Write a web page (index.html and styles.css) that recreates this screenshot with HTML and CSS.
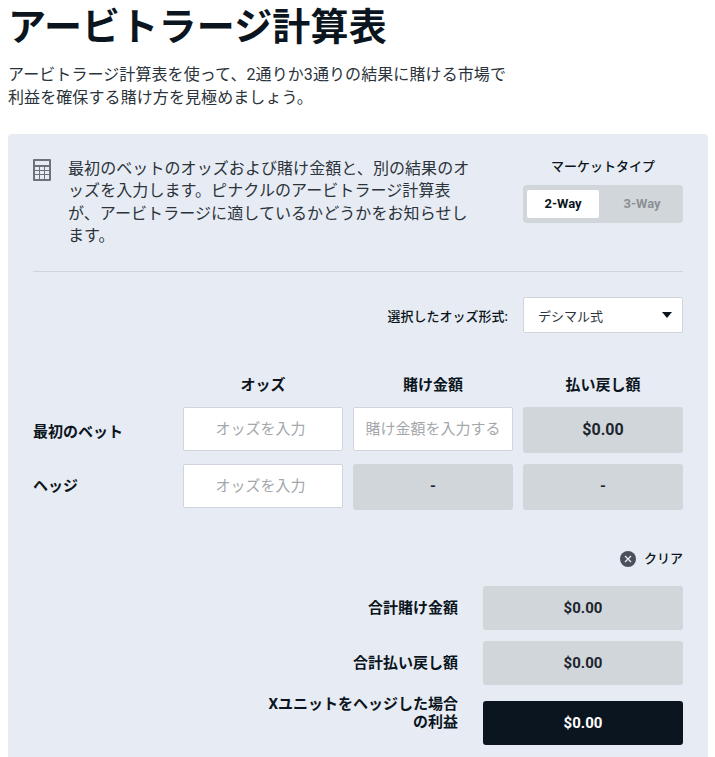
FILE: index.html
```html
<!DOCTYPE html>
<html lang="ja">
<head>
  <meta charset="UTF-8">
  <meta name="viewport" content="width=device-width, initial-scale=1.0">
  <title>アービトラージ計算表</title>
  <link rel="stylesheet" href="styles.css">
</head>
<body>

  <h1>アービトラージ計算表</h1>
  <p class="lead">アービトラージ計算表を使って、2通りか3通りの結果に賭ける市場で<br>利益を確保する賭け方を見極めましょう。</p>

  <div class="panel">

    <!-- Intro and market type -->
    <div class="intro">
      <svg class="calc-icon" width="18" height="22" viewBox="0 0 18 22">
        <path fill="#6d727a" fill-rule="evenodd" d="M1 0h16a1 1 0 0 1 1 1v20a1 1 0 0 1-1 1H1a1 1 0 0 1-1-1V1a1 1 0 0 1 1-1zM2 2v4h14V2zM2 8v3h4V8zM7 8v3h4V8zM12 8v3h4V8zM2 12v3h4v-3zM7 12v3h4v-3zM12 12v3h4v-3zM2 16v4h4v-4zM7 16v4h4v-4zM12 16v4h4v-4z"/>
      </svg>
      <p class="intro-text">最初のベットのオッズおよび賭け金額と、別の結果のオッズを入力します。ピナクルのアービトラージ計算表が、アービトラージに適しているかどうかをお知らせします。</p>
      <div class="market">
        <div class="market-title">マーケットタイプ</div>
        <div class="toggle">
          <span class="toggle-btn active">2-Way</span>
          <span class="toggle-btn">3-Way</span>
        </div>
      </div>
    </div>

    <!-- Odds format -->
    <div class="format-row">
      <span class="format-label">選択したオッズ形式:</span>
      <div class="select">
        <span>デシマル式</span>
        <span class="caret"></span>
      </div>
    </div>

    <!-- Bets table -->
    <div class="bets">
      <div></div>
      <div class="col-head">オッズ</div>
      <div class="col-head">賭け金額</div>
      <div class="col-head">払い戻し額</div>

      <div class="row-label first">最初のベット</div>
      <input class="field odds" type="text" placeholder="オッズを入力">
      <input class="field" type="text" placeholder="賭け金額を入力する">
      <div class="output amount">$0.00</div>

      <div class="row-label">ヘッジ</div>
      <input class="field odds" type="text" placeholder="オッズを入力">
      <div class="output">-</div>
      <div class="output">-</div>
    </div>

    <div class="clear-row">
      <svg width="16" height="16" viewBox="0 0 16 16">
        <circle cx="8" cy="8" r="8" fill="#4a4f59"/>
        <path d="M5 5l6 6M11 5l-6 6" stroke="#e7ebf3" stroke-width="1.4" fill="none"/>
      </svg>
      <span>クリア</span>
    </div>

    <!-- Totals -->
    <div class="totals">
      <div class="total-label">合計賭け金額</div>
      <div class="output">$0.00</div>
      <div class="total-label">合計払い戻し額</div>
      <div class="output">$0.00</div>
      <div class="total-label profit-label">Xユニットをヘッジした場合の利益</div>
      <div class="output profit">$0.00</div>
    </div>

  </div>

</body>
</html>
```

FILE: styles.css
```css
/* General Page Styles */
html, body {
  height: 757px;
  overflow: hidden;
}

body {
  font-family: Roboto, 'Noto Sans CJK JP', sans-serif;
  background-color: #ffffff;
  color: #0b1520;
  margin: 0;
  padding: 0 7px 0 8px;
}

h1 {
  margin: 0;
  padding-top: 4px;
  font-size: 38px;
  line-height: 46px;
  font-weight: 700;
  letter-spacing: 0.2px;
}

.lead {
  margin: 13px 0 0;
  font-size: 16px;
  line-height: 23px;
  letter-spacing: 0.09px;
  color: #2b333b;
}

/* Main Panel */
.panel {
  margin-top: 25px;
  background-color: #e7ebf3;
  border-radius: 4px 4px 0 0;
  padding: 25px 25px 12px;
  height: 623px;
  box-sizing: border-box;
}

.intro {
  display: flex;
  align-items: flex-start;
  height: 112px;
  border-bottom: 1px solid #d0d4dc;
}

.calc-icon {
  flex: none;
  margin-right: 17px;
}

.intro-text {
  margin: -1px 0 0;
  width: 402px;
  flex: none;
  font-size: 16px;
  line-height: 22.4px;
  letter-spacing: 0.08px;
  color: #2b333b;
}

/* Market Type Toggle */
.market {
  margin-left: auto;
  width: 160px;
}

.market-title {
  text-align: center;
  font-size: 13px;
  line-height: 16px;
  font-weight: 500;
  margin-bottom: 10px;
}

.toggle {
  display: flex;
  gap: 7px;
  height: 38px;
  padding: 5px 4px;
  box-sizing: border-box;
  background-color: #d1d6da;
  border-radius: 4px;
}

.toggle-btn {
  width: 72px;
  line-height: 28px;
  text-align: center;
  font-size: 13px;
  font-weight: 700;
  color: #8b9096;
  border-radius: 2px;
}

.toggle-btn.active {
  background-color: #ffffff;
  color: #0b1520;
}

/* Odds Format */
.format-row {
  display: flex;
  justify-content: flex-end;
  align-items: center;
  gap: 15px;
  margin-top: 25px;
}

.format-label {
  font-size: 13px;
  font-weight: 500;
}

.select {
  display: flex;
  justify-content: space-between;
  align-items: center;
  width: 160px;
  height: 36px;
  box-sizing: border-box;
  padding: 0 10px 0 14px;
  background-color: #ffffff;
  border: 1px solid #d0d4dc;
  border-radius: 2px;
  font-size: 13px;
  color: #2b333b;
}

.caret {
  width: 0;
  height: 0;
  border-left: 5.5px solid transparent;
  border-right: 5.5px solid transparent;
  border-top: 6px solid #0b1520;
}

/* Bets Table */
.bets {
  display: grid;
  grid-template-columns: 150px 170px 170px 160px;
  grid-template-rows: 24px 46px 46px;
  row-gap: 11px;
  align-items: start;
  margin-top: 39px;
}

.col-head {
  width: 160px;
  margin-top: 1px;
  text-align: center;
  font-size: 15px;
  line-height: 24px;
  font-weight: 700;
}

.row-label {
  font-size: 15px;
  font-weight: 700;
  line-height: 22px;
  margin-top: 11px;
}

.row-label.first {
  margin-top: 14px;
}

.field {
  width: 160px;
  height: 44px;
  box-sizing: border-box;
  padding: 0 4px;
  background-color: #ffffff;
  border: 1px solid #d0d4dc;
  border-radius: 2px;
  text-align: center;
  font-family: inherit;
  font-size: 15px;
  outline: none;
}

.field.odds {
  padding-right: 9px;
}

.field::placeholder {
  color: #a3a7ab;
  opacity: 1;
}

.output {
  height: 44px;
  line-height: 44px;
  width: 160px;
  background-color: #d1d6da;
  border-radius: 3px;
  text-align: center;
  font-size: 15px;
  font-weight: 700;
  color: #1c252e;
}

.bets .output {
  height: 46px;
  line-height: 45px;
}

.bets .amount {
  font-size: 16px;
}

/* Clear */
.clear-row {
  display: flex;
  justify-content: flex-end;
  align-items: center;
  gap: 8px;
  margin-top: 41px;
  font-size: 13px;
  line-height: 16px;
  font-weight: 500;
}

/* Totals */
.totals {
  display: grid;
  grid-template-columns: 1fr 200px;
  column-gap: 25px;
  align-items: center;
  row-gap: 11px;
  margin-top: 19px;
}

.totals .output {
  width: 200px;
}

.total-label {
  text-align: right;
  font-size: 15px;
  line-height: 18px;
  font-weight: 700;
}

.profit-label {
  align-self: start;
  justify-self: end;
  width: 195px;
  margin-top: -1px;
}

.output.profit {
  margin-top: 5px;
  background-color: #0b1520;
  color: #ffffff;
}
```
